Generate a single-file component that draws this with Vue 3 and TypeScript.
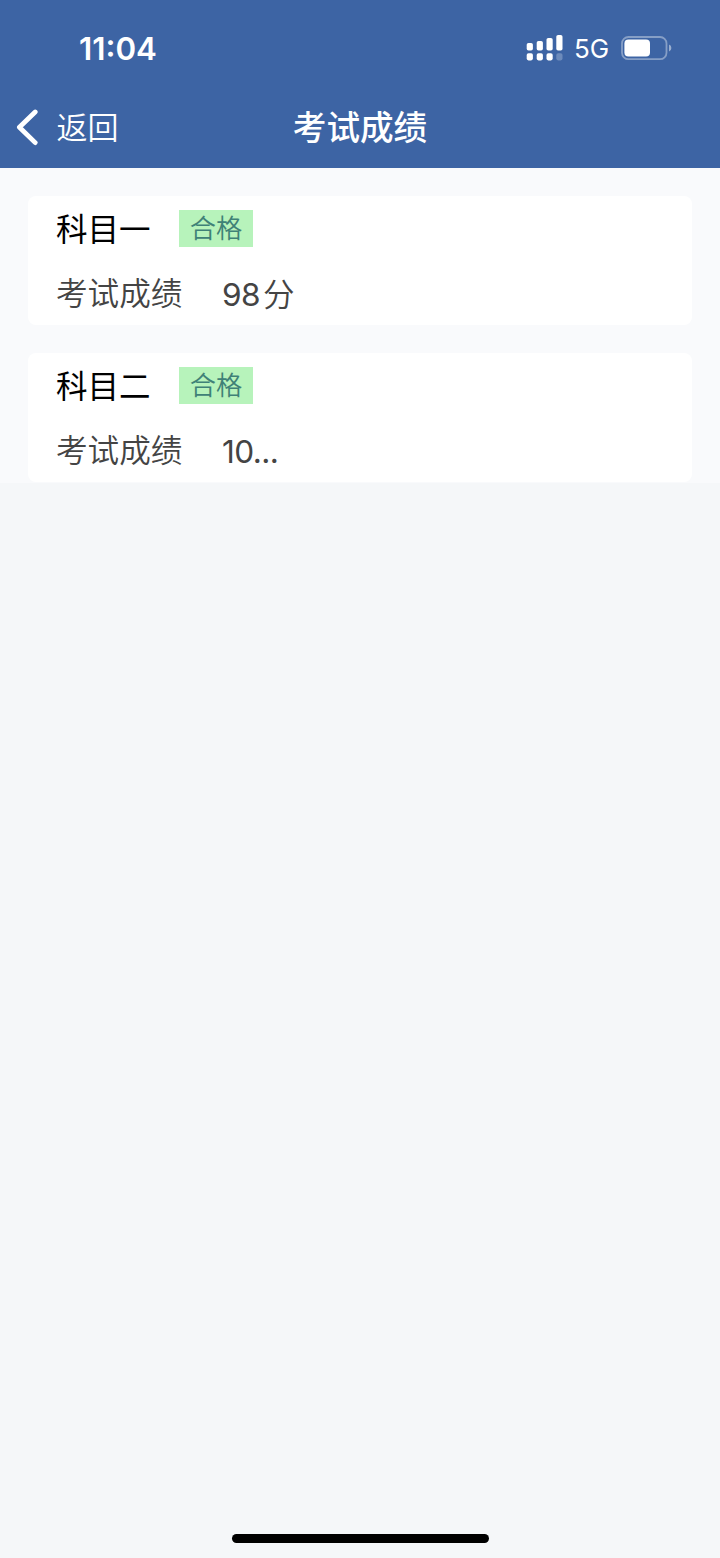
<script setup lang="ts">
interface ExamResult {
  subject: string
  status: string
  score: string
  unit: string
}

const results: ExamResult[] = [
  { subject: '科目一', status: '合格', score: '98', unit: '分' },
  { subject: '科目二', status: '合格', score: '10...', unit: '' },
]
</script>

<template>
  <div class="screen">
    <header class="header">
      <div class="status-bar">
        <span class="time">11:04</span>
        <div class="indicators">
          <svg class="signal" width="38" height="28" viewBox="0 0 38 28" fill="#fff">
            <rect x="0.7" y="9" width="6.2" height="7.6" rx="1.8" />
            <rect x="10.7" y="7" width="6.2" height="9.6" rx="1.8" />
            <rect x="20.5" y="4" width="6.2" height="12.6" rx="1.8" />
            <rect x="30.3" y="1" width="6.2" height="15.6" rx="1.8" />
            <rect x="0.7" y="19.2" width="6.2" height="7.2" rx="1.8" />
            <rect x="10.7" y="19.2" width="6.2" height="7.2" rx="1.8" />
            <rect x="20.5" y="19.2" width="6.2" height="7.2" rx="1.8" />
            <rect x="30.3" y="19.2" width="6.2" height="7.2" rx="1.8" opacity="0.25" />
          </svg>
          <span class="network">5G</span>
          <svg class="battery" width="52" height="26" viewBox="0 0 52 26">
            <rect x="2" y="2" width="44.5" height="22.2" rx="6.5" fill="none" stroke="#fff" stroke-opacity="0.38" stroke-width="1.8" />
            <rect x="4.4" y="4.4" width="25.6" height="17.2" rx="4" fill="#fff" />
            <path d="M49 9.6Q51.4 10.6 51.4 13Q51.4 15.4 49 16.4Z" fill="#fff" fill-opacity="0.48" />
          </svg>
        </div>
      </div>
      <nav class="nav-bar">
        <div class="back">
          <svg width="24" height="38" viewBox="0 0 24 38" fill="none" stroke="#fff" stroke-width="4.8" stroke-linecap="round" stroke-linejoin="round">
            <path d="M20.2 3L4.4 18.3L20.2 33.6" />
          </svg>
          <span class="back-text">返回</span>
        </div>
        <h1 class="title">考试成绩</h1>
      </nav>
    </header>

    <main class="results">
      <section v-for="item in results" :key="item.subject" class="card">
        <div class="subject-row">
          <span class="subject">{{ item.subject }}</span>
          <span class="badge">{{ item.status }}</span>
        </div>
        <div class="score-row">
          <span class="label">考试成绩</span>
          <span class="value">
            <span class="score">{{ item.score }}</span>
            <span v-if="item.unit" class="unit">{{ item.unit }}</span>
          </span>
        </div>
      </section>
    </main>

    <footer class="home-area"><div class="home-indicator"></div></footer>
  </div>
</template>

<style>
body {
  margin: 0;
}
</style>

<style scoped>
.screen {
  display: flex;
  flex-direction: column;
  width: 720px;
  height: 1558px;
  overflow: hidden;
  background: #f5f7f9;
  font-family: Inter, "Noto Sans CJK SC", sans-serif;
}
.header {
  height: 168px;
  flex: none;
  background: #3d64a4;
  color: #fff;
}
.status-bar {
  display: flex;
  justify-content: space-between;
  align-items: center;
  height: 96px;
  box-sizing: border-box;
  padding: 0 48px 0 79px;
}
.time {
  margin-top: 1px;
  font-size: 31.3px;
  font-weight: 600;
  line-height: 40px;
}
.indicators {
  display: flex;
  align-items: center;
}
.network {
  width: 34px;
  margin: 2px 12px 0 10px;
  font-size: 26px;
  font-weight: 400;
  line-height: 32px;
}
.nav-bar {
  display: grid;
  grid-template-columns: 1fr auto 1fr;
  align-items: center;
  height: 63px;
}
.back {
  display: flex;
  align-items: center;
  gap: 17.5px;
  padding-left: 15px;
}
.back-text {
  font-size: 31px;
  font-weight: 350;
  line-height: 40px;
}
.title {
  margin: 0;
  font-size: 33.6px;
  font-weight: 500;
  line-height: 44px;
}
.results {
  display: flex;
  flex-direction: column;
  gap: 28px;
  padding: 28px 28px 1px;
  background: #f9fafc;
}
.card {
  height: 129px;
  box-sizing: border-box;
  padding: 14px 28px 0;
  border-radius: 8px;
  background: #fff;
}
.subject-row {
  display: flex;
  align-items: flex-start;
  height: 40px;
}
.subject {
  width: 123px;
  font-size: 31.5px;
  line-height: 40px;
  color: #000;
}
.badge {
  width: 74px;
  height: 37px;
  font-size: 26.3px;
  font-weight: 350;
  line-height: 38px;
  text-align: center;
  color: #3f8177;
  background: #b7f3bb;
}
.score-row {
  display: flex;
  align-items: flex-start;
  margin-top: 24px;
  font-size: 31.6px;
  font-weight: 350;
  line-height: 40px;
  color: #444;
}
.label {
  width: 166px;
}
.value {
  display: flex;
  align-items: baseline;
  padding-top: 1px;
}
.score {
  font-weight: 400;
  letter-spacing: -0.6px;
}
.unit {
  margin-left: 3px;
}
.home-area {
  display: flex;
  justify-content: center;
  margin-top: auto;
  padding-bottom: 15px;
}
.home-indicator {
  width: 257px;
  height: 9px;
  border-radius: 5px;
  background: #000;
}
</style>
